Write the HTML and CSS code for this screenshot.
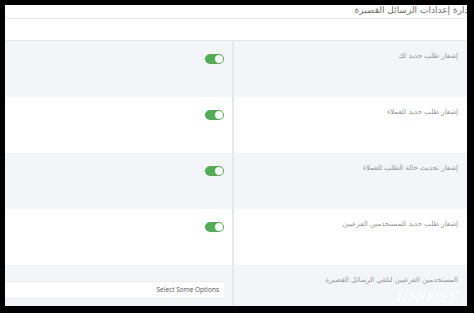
FILE: index.html
```html
<!DOCTYPE html>
<html lang="ar">
<head>
<meta charset="utf-8">
<link rel="stylesheet" href="styles.css">
</head>
<body>
<div class="frame" dir="rtl">
  <div class="page-head"><h1 class="title">إدارة إعدادات الرسائل القصيرة</h1></div>
  <div class="tabs"></div>
  <div class="rows">
    <div class="row gray">
      <div class="label">إشعار طلب جديد لك</div>
      <div class="field"><span class="toggle"><span class="knob"></span></span></div>
    </div>
    <div class="row">
      <div class="label">إشعار طلب جديد للعملاء</div>
      <div class="field"><span class="toggle"><span class="knob"></span></span></div>
    </div>
    <div class="row gray">
      <div class="label">إشعار تحديث حالة الطلب للعملاء</div>
      <div class="field"><span class="toggle"><span class="knob"></span></span></div>
    </div>
    <div class="row">
      <div class="label">إشعار طلب جديد للمستخدمين الفرعيين</div>
      <div class="field"><span class="toggle"><span class="knob"></span></span></div>
    </div>
    <div class="row gray">
      <div class="label">المستخدمين الفرعيين لتلقي الرسائل القصيرة</div>
      <div class="field"><div class="select">Select Some Options</div></div>
    </div>
  </div>
  <div class="watermark">NAYMEF</div>
</div>
</body>
</html>
```
FILE: styles.css
```css
html, body {
  margin: 0;
  padding: 0;
  background: #000;
}
body {
  padding: 5px 0 0 5px;
  font-family: "DejaVu Sans", "Noto Sans", sans-serif;
}
.frame {
  position: relative;
  width: 462px;
  height: 301px;
  overflow: hidden;
  background: #fff;
}
.page-head {
  height: 13px;
  border-bottom: 1px solid #ececec;
}
.title {
  margin: 0 -4px 0 0;
  font-size: 9px;
  font-weight: normal;
  line-height: 11px;
  color: #707070;
  white-space: nowrap;
}
.tabs {
  height: 21px;
  border-bottom: 1px solid #e6e6e6;
}
.row {
  display: grid;
  grid-template-columns: 235px 227px;
  height: 56px;
  background: #fff;
}
.row.gray {
  background: #f4f5f8;
}
.label {
  border-left: 2px solid #e7e8ec;
  padding: 10px 9px 0 0;
  font-size: 7px;
  color: #939393;
  line-height: 10px;
}
.field {
  padding: 13px 8px 0 0;
}
.toggle {
  display: block;
  position: relative;
  width: 19px;
  height: 10px;
  border-radius: 5px;
  background: #52ad54;
}
.knob {
  position: absolute;
  top: 1px;
  left: 10px;
  width: 8px;
  height: 8px;
  border-radius: 50%;
  background: #fff;
}
.row:nth-child(5) .field {
  padding-top: 16px;
}
.select {
  height: 16px;
  margin-left: -2px;
  background: #fff;
  border: 1px solid #ededed;
  border-right: none;
  font-family: "Open Sans", "Liberation Sans", sans-serif;
  font-size: 6.5px;
  line-height: 16px;
  color: #555;
  padding-right: 5px;
}
.watermark {
  position: absolute;
  right: 8px;
  bottom: 1px;
  font-family: "Liberation Sans", sans-serif;
  font-weight: bold;
  font-size: 15px;
  line-height: 16px;
  color: rgba(255,255,255,0.55);
}
```
